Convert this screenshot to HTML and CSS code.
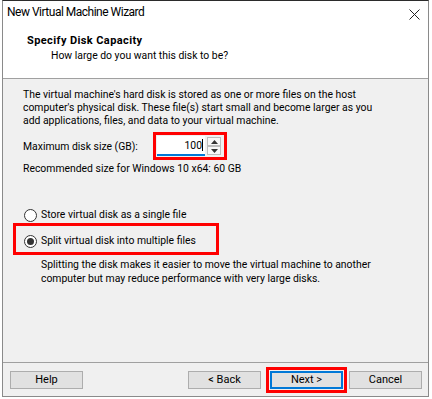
FILE: index.html
```html
<!DOCTYPE html>
<html lang="en">
<head>
	<meta charset="UTF-8">
	<title>New Virtual Machine Wizard</title>
	<link rel="stylesheet" href="styles.css">
</head>
<body>
	<div class="window">
		<div class="titlebar">
			<span class="title">New Virtual Machine Wizard</span>
			<svg class="close" width="11" height="11" viewBox="0 0 11 11">
				<path d="M0.5 0.5 L10.5 10.5 M10.5 0.5 L0.5 10.5" stroke="#222" stroke-width="1" fill="none"/>
			</svg>
		</div>
		<div class="header">
			<div class="head-title">Specify Disk Capacity</div>
			<div class="head-sub">How large do you want this disk to be?</div>
		</div>
		<div class="content">
			<p class="intro">The virtual machine's hard disk is stored as one or more files on the host<br>computer's physical disk. These file(s) start small and become larger as you<br>add applications, files, and data to your virtual machine.</p>
			<div class="size-row">
				<span class="size-label">Maximum disk size (GB):</span>
				<span class="mark">
					<span class="spin">
						<span class="spin-value">100<span class="caret"></span></span>
						<span class="spin-arrows">
							<span class="arrow"><svg width="7" height="4" viewBox="0 0 7 4"><path d="M3.5 0 L7 4 L0 4 Z" fill="#333"/></svg></span>
							<span class="arrow"><svg width="7" height="4" viewBox="0 0 7 4"><path d="M0 0 L7 0 L3.5 4 Z" fill="#333"/></svg></span>
						</span>
					</span>
				</span>
			</div>
			<p class="rec">Recommended size for Windows 10 x64: 60 GB</p>
			<div class="options">
				<div class="radio"><span class="dot"></span>Store virtual disk as a single file</div>
				<div class="mark-wide">
					<div class="radio"><span class="dot checked"></span>Split virtual disk into multiple files</div>
				</div>
				<p class="note">Splitting the disk makes it easier to move the virtual machine to another<br>computer but may reduce performance with very large disks.</p>
			</div>
		</div>
		<div class="footer">
			<button class="btn">Help</button>
			<div class="right-btns">
				<button class="btn">&lt; Back</button>
				<span class="mark-btn"><button class="btn btn-default">Next &gt;</button></span>
				<button class="btn">Cancel</button>
			</div>
		</div>
	</div>
</body>
</html>
```

FILE: styles.css
```css
*{
	padding: 0px;
	margin: 0px;
	box-sizing: border-box;
}
body{
	background-color: #fff;
	font-family: Roboto, "Liberation Sans", sans-serif;
	font-size: 10.4px;
	color: #000;
}
.window{
	width: 427px;
	height: 397px;
	margin-left: 2px;
	border: 1px solid #8a8a8a;
	border-top-color: #2b2b2b;
	background-color: #f0f0f0;
	display: flex;
	flex-direction: column;
}
.titlebar{
	height: 26px;
	background-color: #fff;
	display: flex;
	justify-content: space-between;
	padding: 3px 8px 0 4px;
}
.title{
	font-size: 12px;
	letter-spacing: -0.5px;
	line-height: 16px;
}
.close{
	margin-top: 5px;
}
.header{
	background-color: #fff;
	height: 52px;
	padding: 6px 0 0 24px;
	border-bottom: 1px solid #a0a0a0;
	line-height: 15px;
}
.head-title{
	font-weight: bold;
	font-size: 11px;
	letter-spacing: 0.4px;
}
.head-sub{
	padding-left: 24px;
}
.content{
	flex: 1;
	padding: 9px 0 0 20px;
	line-height: 13px;
}
.size-row{
	display: flex;
	align-items: center;
	margin-top: 5px;
}
.size-label{
	width: 130px;
}
.mark{
	border: 3px solid #f00;
	padding: 1px;
	display: inline-block;
}
.spin{
	display: flex;
	width: 66px;
	height: 20px;
	background-color: #fff;
}
.spin-value{
	flex: 1;
	display: flex;
	justify-content: flex-end;
	align-items: center;
	padding-right: 2px;
	border-bottom: 2px solid #0078d7;
}
.caret{
	width: 1px;
	height: 12px;
	background-color: #000;
}
.spin-arrows{
	width: 18px;
	display: flex;
	flex-direction: column;
	padding: 1px 2px;
	background-color: #f0f0f0;
}
.arrow{
	flex: 1;
	display: flex;
	align-items: center;
	justify-content: center;
	border: 1px solid #bdbdbd;
	background-color: #f7f7f7;
}
.rec{
	margin-top: 2px;
}
.options{
	margin-top: 33px;
	line-height: 14px;
}
.radio{
	display: flex;
	align-items: center;
	height: 14px;
}
.dot{
	width: 13px;
	height: 13px;
	border: 1px solid #333;
	border-radius: 50%;
	background-color: #fff;
	margin: 0 4px 0 1px;
	display: flex;
	align-items: center;
	justify-content: center;
}
.dot.checked::after{
	content: "";
	width: 7px;
	height: 7px;
	border-radius: 50%;
	background-color: #333;
}
.mark-wide{
	width: 206px;
	margin: 1px 0 0 -10px;
	border: 3px solid #f00;
	padding: 8px 0 4px 7px;
}
.note{
	margin-top: 3px;
	padding-left: 18px;
}
.footer{
	height: 34px;
	border-top: 1px solid #a0a0a0;
	display: flex;
	justify-content: space-between;
	align-items: center;
	padding: 0 6px 0 7px;
}
.right-btns{
	display: flex;
	align-items: center;
}
.btn{
	width: 73px;
	height: 18px;
	font: 11px Roboto, "Liberation Sans", sans-serif;
	color: #000;
	background-color: #e1e1e1;
	border: 1px solid #adadad;
}
.btn-default{
	border: 2px solid #0078d7;
}
.mark-btn{
	border: 3px solid #f00;
	padding: 1px;
	margin: 0 2px 0 5px;
	display: flex;
}
```
